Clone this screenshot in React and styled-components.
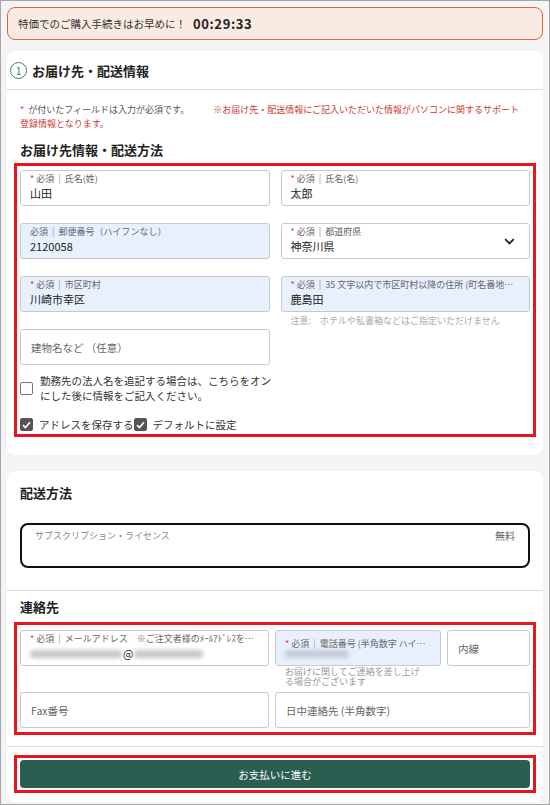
import React from "react";
import styled, { createGlobalStyle } from "styled-components";

const GlobalStyle = createGlobalStyle`
  html, body {
    margin: 0;
    padding: 0;
  }
  body {
    font-family: "Noto Sans CJK JP", "Noto Sans", sans-serif;
    color: #222;
  }
  * {
    box-sizing: border-box;
  }
`;

const Chevron = () => (
  <svg width="11" height="7" viewBox="0 0 11 7">
    <path d="M1.2 1.2 L5.5 5.5 L9.8 1.2" fill="none" stroke="#222" strokeWidth="1.8" />
  </svg>
);

const Check = () => (
  <svg width="9" height="8" viewBox="0 0 9 8">
    <path d="M1 4.2 L3.4 6.5 L8 1.2" fill="none" stroke="#fff" strokeWidth="1.7" />
  </svg>
);

const Field = ({ required, label, value, placeholder, filled, select, children }) => {
  if (placeholder) {
    return (
      <FieldBox $filled={filled}>
        <Placeholder>{placeholder}</Placeholder>
      </FieldBox>
    );
  }
  return (
    <FieldBox $filled={filled}>
      <FieldText>
        <Label>
          {required && <Star>*</Star>}
          必須<Sep>|</Sep>
          {label}
        </Label>
        <Value>{children || value}</Value>
      </FieldText>
      {select && <Chevron />}
    </FieldBox>
  );
};

const App = () => {
  return (
    <>
      <GlobalStyle />
      <Page>
        <Banner>
          特価でのご購入手続きはお早めに！
          <Timer>00:29:33</Timer>
        </Banner>

        <Card $gap={16}>
          <CardHeader>
            <StepCircle>1</StepCircle>
            お届け先・配送情報
          </CardHeader>
          <CardBody $bottom={18}>
            <Note>
              <Star>*</Star> が付いたフィールドは入力が必須です。
              <Warn>
                ※お届け先・配送情報にご記入いただいた情報がパソコンに関するサポート登録情報となります。
              </Warn>
            </Note>
            <SubHeading $top={10}>お届け先情報・配送方法</SubHeading>

            <Highlight $top={4} $pad="4px 3px 2px">
              <AddressGrid>
                <Field required label="氏名(姓)" value="山田" />
                <Field required label="氏名(名)" value="太郎" />
                <Field filled label="郵便番号（ハイフンなし）" value="2120058" />
                <Field required select label="都道府県" value="神奈川県" />
                <Field required filled label="市区町村" value="川崎市幸区" />
                <Cell>
                  <Field
                    required
                    filled
                    label="35 文字以内で市区町村以降の住所 (町名番地まで)"
                    value="鹿島田"
                  />
                  <Hint>注意:　ホテルや私書箱などはご指定いただけません</Hint>
                </Cell>
                <Field placeholder="建物名など （任意）" />
              </AddressGrid>

              <CorporateRow>
                <Box />
                <CorporateText>
                  勤務先の法人名を追記する場合は、こちらをオンにした後に情報をご記入ください。
                </CorporateText>
              </CorporateRow>

              <CheckRow>
                <Box $checked>
                  <Check />
                </Box>
                <CheckLabel>アドレスを保存する</CheckLabel>
                <Box $checked>
                  <Check />
                </Box>
                <CheckLabel>デフォルトに設定</CheckLabel>
              </CheckRow>
            </Highlight>
          </CardBody>
        </Card>

        <Card>
          <CardBody $bottom={9}>
            <SubHeading>配送方法</SubHeading>
            <ShippingOption>
              <span>サブスクリプション・ライセンス</span>
              <Price>無料</Price>
            </ShippingOption>

            <Divider $top={22} />

            <SubHeading $top={7}>連絡先</SubHeading>
            <Highlight $top={6} $pad="5px 3px 4px">
              <ContactGrid>
                <Field required label="メールアドレス　※ご注文者様のﾒｰﾙｱﾄﾞﾚｽをご入力ください">
                  <Blur $w={92} />
                  <At>@</At>
                  <Blur $w={69} />
                </Field>
                <Cell>
                  <Field required filled label="電話番号 (半角数字 ハイフンなし)">
                    <Blur $w={64} $light />
                  </Field>
                  <SmallHint>お届けに関してご連絡を差し上げる場合がございます</SmallHint>
                </Cell>
                <Field placeholder="内線" />
                <Field placeholder="Fax番号" />
                <Wide>
                  <Field placeholder="日中連絡先 (半角数字)" />
                </Wide>
              </ContactGrid>
            </Highlight>

            <Divider $top={11} />

            <Highlight $top={8} $pad="2px 3px">
              <PayButton>お支払いに進む</PayButton>
            </Highlight>
          </CardBody>
        </Card>
      </Page>
    </>
  );
};

export default App;

// Styled Components

const Page = styled.div`
  width: 550px;
  height: 805px;
  overflow: hidden;
  border: 1px solid #a6a6a6;
  background: #f4f4f4;
  padding: 6px;
`;

const Banner = styled.div`
  height: 33px;
  display: flex;
  align-items: center;
  padding: 0 10px;
  margin-bottom: 11px;
  border: 1.5px solid #d56a3c;
  border-radius: 8px;
  background: #f9ebe1;
  font-size: 10.5px;
  color: #333;
`;

const Timer = styled.span`
  margin-left: 7px;
  font-size: 13px;
  font-weight: 700;
  letter-spacing: 0.6px;
  color: #222;
`;

const Card = styled.div`
  background: #fff;
  border-radius: 8px;
  margin-bottom: ${(p) => p.$gap || 0}px;
`;

const CardHeader = styled.div`
  height: 39px;
  display: flex;
  align-items: center;
  gap: 5px;
  padding-left: 3px;
  border-bottom: 1px solid #dcdcdc;
  font-size: 13px;
  font-weight: 700;
`;

const StepCircle = styled.span`
  width: 17px;
  height: 17px;
  border: 1px solid #3d7d69;
  border-radius: 50%;
  display: flex;
  align-items: center;
  justify-content: center;
  font-size: 10px;
  font-weight: 400;
  color: #3d7d69;
`;

const CardBody = styled.div`
  padding: 13px 13px ${(p) => p.$bottom}px;
`;

const Note = styled.p`
  margin: 0;
  font-size: 9px;
  line-height: 14px;
  color: #555;
  padding-right: 4px;
`;

const Star = styled.span`
  color: #e53935;
  margin-right: 2px;
`;

const Warn = styled.span`
  margin-left: 24px;
  color: #cc3b33;
`;

const SubHeading = styled.h3`
  margin: ${(p) => p.$top || 0}px 0 0;
  font-size: 13px;
  line-height: 18px;
  font-weight: 700;
  color: #222;
`;

const Highlight = styled.div`
  margin: ${(p) => p.$top}px -6px 0;
  border: 3px solid #e8141e;
  padding: ${(p) => p.$pad};
`;

const AddressGrid = styled.div`
  display: grid;
  grid-template-columns: 1fr 1fr;
  grid-auto-rows: 36px;
  column-gap: 11px;
  row-gap: 17px;
`;

const ContactGrid = styled.div`
  display: grid;
  grid-template-columns: 249px 1fr 83px;
  grid-auto-rows: 36px;
  column-gap: 6px;
  row-gap: 26px;
`;

const Cell = styled.div`
  min-width: 0;
`;

const Wide = styled.div`
  grid-column: 2 / 4;
`;

const FieldBox = styled.div`
  height: 36px;
  display: flex;
  align-items: center;
  gap: 8px;
  padding: 0 14px 0 9px;
  border: 1px solid #c9c9c9;
  border-radius: 3px;
  background: ${(p) => (p.$filled ? "#e8f0fe" : "#fff")};
  min-width: 0;
`;

const FieldText = styled.div`
  flex: 1;
  min-width: 0;
  display: flex;
  flex-direction: column;
  margin-top: -1px;
`;

const Label = styled.div`
  font-size: 9px;
  line-height: 12px;
  color: #666;
  white-space: nowrap;
  overflow: hidden;
  text-overflow: ellipsis;
`;

const Sep = styled.span`
  margin: 0 4px;
  color: #999;
`;

const Value = styled.div`
  display: flex;
  align-items: center;
  font-size: 11px;
  line-height: 17px;
  color: #222;
`;

const Placeholder = styled.span`
  font-size: 10.5px;
  color: #666;
  padding-left: 1px;
`;

const Hint = styled.div`
  margin-top: 3px;
  padding-left: 10px;
  font-size: 9px;
  line-height: 12px;
  color: #aaa;
  white-space: nowrap;
`;

const SmallHint = styled.div`
  margin-top: 1px;
  padding: 0 18px 0 10px;
  font-size: 9px;
  line-height: 10px;
  color: #999;
`;

const Blur = styled.span`
  display: inline-block;
  width: ${(p) => p.$w}px;
  height: 8px;
  border-radius: 3px;
  background: ${(p) => (p.$light ? "#c4ccd8" : "#c8c8c8")};
  filter: blur(2px);
`;

const At = styled.span`
  margin: 0 1px;
  font-size: 11px;
`;

const CorporateRow = styled.div`
  margin-top: 8px;
  display: flex;
  align-items: center;
  gap: 7px;
`;

const CorporateText = styled.span`
  flex: 0 0 236px;
  width: 236px;
  font-size: 10.5px;
  line-height: 15px;
  color: #333;
`;

const CheckRow = styled.div`
  margin-top: 14px;
  height: 15px;
  display: flex;
  align-items: center;
`;

const Box = styled.span`
  flex: 0 0 13px;
  width: 13px;
  height: 13px;
  border-radius: 2px;
  display: flex;
  align-items: center;
  justify-content: center;
  border: 1px solid ${(p) => (p.$checked ? "#555" : "#767676")};
  background: ${(p) => (p.$checked ? "#555" : "#fff")};
`;

const CheckLabel = styled.span`
  margin-left: 6px;
  font-size: 10.5px;
  color: #333;
`;

const ShippingOption = styled.div`
  margin-top: 21px;
  height: 45px;
  display: flex;
  justify-content: space-between;
  align-items: flex-start;
  padding: 5px 13px 0;
  border: 2px solid #111;
  border-radius: 8px;
  font-size: 9px;
  line-height: 12px;
  color: #888;
`;

const Price = styled.span`
  font-size: 10px;
  color: #666;
`;

const Divider = styled.hr`
  margin: ${(p) => p.$top}px -13px 0;
  border: 0;
  border-top: 1px solid #dcdcdc;
`;

const PayButton = styled.button`
  width: 100%;
  height: 28px;
  border: 0;
  border-radius: 4px;
  background: #2a5e50;
  color: #fff;
  font-family: inherit;
  font-size: 10.5px;
  display: block;
`;
